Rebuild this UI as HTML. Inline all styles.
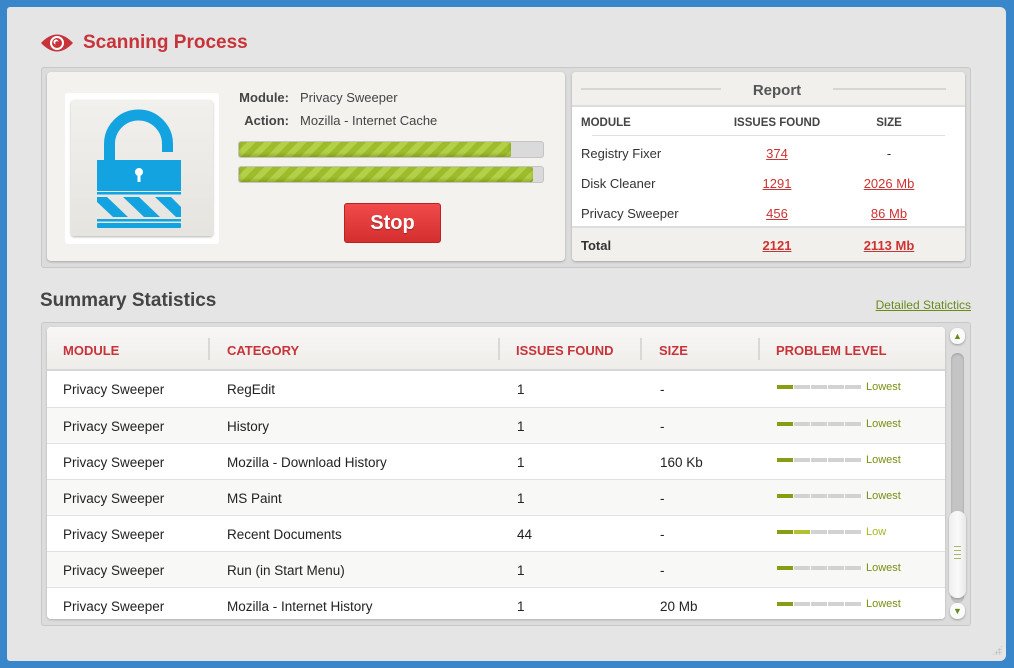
<!DOCTYPE html>
<html><head><meta charset="utf-8"><style>
*{margin:0;padding:0;box-sizing:border-box}
body{width:1014px;height:668px;background:#3a86ca;font-family:"Liberation Sans",sans-serif;position:relative;overflow:hidden;color:#333}
.abs{position:absolute}
#panel{left:7px;top:7px;width:999px;height:654px;background:#e5e5e5;border-radius:3px 6px 6px 3px}
.title{font-weight:bold;font-size:19px;color:#c8333a}
.box{background:#dcdcdc;border:1px solid #c8c8c8;border-radius:3px}
.card{background:#f3f2ef;border-radius:4px;box-shadow:0 1px 2px rgba(0,0,0,.25)}
.t13{font-size:13px}
.bar{height:17px;background:#dadada;border:1px solid #c4c4c4;border-radius:3px;overflow:hidden}
.fill{height:100%;background:repeating-linear-gradient(135deg,#9cbc2c 0 6px,#b4d048 6px 12px);border-radius:2px;box-shadow:inset 0 -2px 3px rgba(80,100,0,.35)}
.red{color:#c33;text-decoration:underline}
.th{font-weight:bold;font-size:13px;color:#c8333a}
.row{position:absolute;left:0;width:898px;height:36px;border-top:1px solid #e2e2e2;font-size:13.5px;color:#222}
.row span{position:absolute;top:11px}
.lvl{position:absolute;left:730px;top:14px;height:4px;width:84px;background:linear-gradient(90deg,#8a9c12 0 16px,transparent 16px 17px,#d2d2d2 17px 33px,transparent 33px 34px,#d2d2d2 34px 50px,transparent 50px 51px,#d2d2d2 51px 67px,transparent 67px 68px,#d2d2d2 68px 84px)}
.lvl.low{background:linear-gradient(90deg,#8a9c12 0 16px,transparent 16px 17px,#b4c030 17px 33px,transparent 33px 34px,#d2d2d2 34px 50px,transparent 50px 51px,#d2d2d2 51px 67px,transparent 67px 68px,#d2d2d2 68px 84px)}
.lt{position:absolute;left:819px;top:10px;font-size:11px;color:#7a8e12}
.sep{position:absolute;top:11px;width:2px;height:22px;background:#d8d8d8}
</style></head><body>
<div id="panel" class="abs"></div>
<svg class="abs" style="left:40px;top:32px" width="34" height="22" viewBox="0 0 34 22"><path d="M1 11 Q17 -6 33 11 Q17 28 1 11Z" fill="#c8333a"/><circle cx="17" cy="11" r="7" fill="#fff"/><circle cx="17" cy="11" r="5" fill="#c8333a"/><circle cx="16" cy="10" r="2.5" fill="#fff"/><circle cx="17" cy="11" r="1.8" fill="#c8333a"/></svg>
<div class="abs title" style="left:83px;top:32px">Scanning Process</div>

<div class="abs box" style="left:41px;top:67px;width:930px;height:201px"></div>
<div class="abs card" style="left:47px;top:72px;width:518px;height:189px"></div>
<div class="abs" style="left:65px;top:93px;width:154px;height:151px;background:#fff;border-radius:3px"></div>
<div class="abs" style="left:71px;top:100px;width:142px;height:136px;background:linear-gradient(#f1f0ed,#e6e4df);border-radius:3px;box-shadow:0 1px 2px rgba(0,0,0,.3)"></div>
<svg class="abs" style="left:97px;top:108px" width="90" height="122" viewBox="0 0 90 122"><path d="M12.5 54 V36 A29 29 0 0 1 70.5 36 V44" fill="none" stroke="#13a3e0" stroke-width="11"/><rect x="0" y="52" width="84" height="31" fill="#13a3e0"/><circle cx="42" cy="64" r="4" fill="#fff"/><rect x="40.5" y="65" width="3" height="9" fill="#fff"/><rect x="0" y="84" width="84" height="2.5" fill="#13a3e0"/><path d="M0 89 H10 L31 109 H16 L0 94Z M26 89 H42 L63 109 H47Z M58 89 H74 L84 99 V109 H79Z" fill="#13a3e0"/><rect x="0" y="111" width="84" height="2.5" fill="#13a3e0"/><rect x="0" y="115" width="84" height="5" rx="1" fill="#13a3e0"/></svg>
<div class="abs t13" style="left:200px;top:90px;width:89px;text-align:right;font-weight:bold;color:#444">Module:</div>
<div class="abs t13" style="left:300px;top:90px;color:#444">Privacy Sweeper</div>
<div class="abs t13" style="left:200px;top:113px;width:89px;text-align:right;font-weight:bold;color:#444">Action:</div>
<div class="abs t13" style="left:300px;top:113px;color:#444">Mozilla - Internet Cache</div>
<div class="abs bar" style="left:238px;top:141px;width:306px"><div class="fill" style="width:272px"></div></div>
<div class="abs bar" style="left:238px;top:166px;width:306px"><div class="fill" style="width:294px"></div></div>
<div class="abs" style="left:344px;top:203px;width:97px;height:40px;background:linear-gradient(#f04a4a,#d42e2e);border:1px solid #b82424;border-radius:3px;color:#fff;font-weight:bold;font-size:20px;text-align:center;line-height:38px;text-shadow:0 1px 1px rgba(0,0,0,.3)">Stop</div>

<div class="abs card" style="left:572px;top:72px;width:393px;height:189px;background:#fff;overflow:hidden">
 <div class="abs" style="left:0;top:0;width:393px;height:35px;background:#f1f0ed;border-bottom:2px solid #ddd"></div>
 <div class="abs" style="left:9px;top:16px;width:140px;height:2px;background:#d6d6d6"></div>
 <div class="abs" style="left:261px;top:16px;width:113px;height:2px;background:#d6d6d6"></div>
 <div class="abs" style="left:150px;top:10px;width:110px;text-align:center;font-weight:bold;font-size:15px;color:#555">Report</div>
 <div class="abs" style="left:9px;top:45px;font-weight:bold;font-size:11.5px;color:#444">MODULE</div>
 <div class="abs" style="left:145px;top:45px;width:120px;text-align:center;font-weight:bold;font-size:11.5px;color:#444">ISSUES FOUND</div>
 <div class="abs" style="left:277px;top:45px;width:80px;text-align:center;font-weight:bold;font-size:11.5px;color:#444">SIZE</div>
 <div class="abs" style="left:20px;top:63px;width:353px;height:1px;background:#e0e0e0"></div>
 <div class="abs t13" style="left:9px;top:74px">Registry Fixer</div>
 <div class="abs t13 red" style="left:145px;top:74px;width:120px;text-align:center">374</div>
 <div class="abs t13" style="left:277px;top:74px;width:80px;text-align:center">-</div>
 <div class="abs t13" style="left:9px;top:104px">Disk Cleaner</div>
 <div class="abs t13 red" style="left:145px;top:104px;width:120px;text-align:center">1291</div>
 <div class="abs t13 red" style="left:277px;top:104px;width:80px;text-align:center">2026 Mb</div>
 <div class="abs t13" style="left:9px;top:134px">Privacy Sweeper</div>
 <div class="abs t13 red" style="left:145px;top:134px;width:120px;text-align:center">456</div>
 <div class="abs t13 red" style="left:277px;top:134px;width:80px;text-align:center">86 Mb</div>
 <div class="abs" style="left:0;top:154px;width:393px;height:35px;background:#f1f0ed;border-top:2px solid #ddd"></div>
 <div class="abs t13" style="left:9px;top:166px;font-weight:bold;color:#333">Total</div>
 <div class="abs t13 red" style="left:145px;top:166px;width:120px;text-align:center;font-weight:bold">2121</div>
 <div class="abs t13 red" style="left:277px;top:166px;width:80px;text-align:center;font-weight:bold">2113 Mb</div>
</div>

<div class="abs" style="left:40px;top:290px;font-weight:bold;font-size:19px;color:#444">Summary Statistics</div>
<div class="abs" style="left:840px;top:298px;width:131px;text-align:right;font-size:12px;color:#6a8a1a;text-decoration:underline">Detailed Statictics</div>

<div class="abs box" style="left:41px;top:322px;width:930px;height:304px"></div>
<div class="abs" style="left:47px;top:327px;width:898px;height:292px;background:#fff;border-radius:4px;overflow:hidden;box-shadow:0 1px 2px rgba(0,0,0,.2)">
 <div class="abs" style="left:0;top:0;width:898px;height:44px;background:linear-gradient(#f8f7f5,#eeedea);border-bottom:2px solid #d6d6d6"></div>
 <div class="abs th" style="left:16px;top:16px">MODULE</div>
 <div class="sep" style="left:161px"></div>
 <div class="abs th" style="left:180px;top:16px">CATEGORY</div>
 <div class="sep" style="left:451px"></div>
 <div class="abs th" style="left:469px;top:16px">ISSUES FOUND</div>
 <div class="sep" style="left:593px"></div>
 <div class="abs th" style="left:612px;top:16px">SIZE</div>
 <div class="sep" style="left:711px"></div>
 <div class="abs th" style="left:729px;top:16px">PROBLEM LEVEL</div>

 <div class="row" style="top:44px;background:#fff;border-top:none"><span style="left:16px">Privacy Sweeper</span><span style="left:180px">RegEdit</span><span style="left:470px">1</span><span style="left:613px">-</span><div class="lvl"></div><div class="lt">Lowest</div></div>
 <div class="row" style="top:80px;background:#f8f8f6"><span style="left:16px">Privacy Sweeper</span><span style="left:180px">History</span><span style="left:470px">1</span><span style="left:613px">-</span><div class="lvl"></div><div class="lt">Lowest</div></div>
 <div class="row" style="top:116px;background:#fff"><span style="left:16px">Privacy Sweeper</span><span style="left:180px">Mozilla - Download History</span><span style="left:470px">1</span><span style="left:613px">160 Kb</span><div class="lvl"></div><div class="lt">Lowest</div></div>
 <div class="row" style="top:152px;background:#f8f8f6"><span style="left:16px">Privacy Sweeper</span><span style="left:180px">MS Paint</span><span style="left:470px">1</span><span style="left:613px">-</span><div class="lvl"></div><div class="lt">Lowest</div></div>
 <div class="row" style="top:188px;background:#fff"><span style="left:16px">Privacy Sweeper</span><span style="left:180px">Recent Documents</span><span style="left:470px">44</span><span style="left:613px">-</span><div class="lvl low"></div><div class="lt" style="color:#a8b822">Low</div></div>
 <div class="row" style="top:224px;background:#f8f8f6"><span style="left:16px">Privacy Sweeper</span><span style="left:180px">Run (in Start Menu)</span><span style="left:470px">1</span><span style="left:613px">-</span><div class="lvl"></div><div class="lt">Lowest</div></div>
 <div class="row" style="top:260px;background:#fff"><span style="left:16px">Privacy Sweeper</span><span style="left:180px">Mozilla - Internet History</span><span style="left:470px">1</span><span style="left:613px">20 Mb</span><div class="lvl"></div><div class="lt">Lowest</div></div>
</div>

<div class="abs" style="left:950px;top:328px;width:15px;height:16px;border-radius:7px;background:#fafafa;box-shadow:0 1px 2px rgba(0,0,0,.3);color:#6a8a1a;font-size:9px;text-align:center;line-height:16px">&#9650;</div>
<div class="abs" style="left:951px;top:353px;width:13px;height:250px;border-radius:7px;background:#c4c4c4;box-shadow:inset 0 1px 2px rgba(0,0,0,.2)"></div>
<div class="abs" style="left:949px;top:511px;width:17px;height:87px;border-radius:8px;background:linear-gradient(90deg,#eee,#fafafa,#e8e8e8);box-shadow:0 1px 2px rgba(0,0,0,.25)"></div>
<div class="abs" style="left:954px;top:546px;width:7px;height:14px;background:repeating-linear-gradient(#a8b86a 0 1px,transparent 1px 4px)"></div>
<div class="abs" style="left:950px;top:603px;width:15px;height:16px;border-radius:7px;background:#fafafa;box-shadow:0 1px 2px rgba(0,0,0,.3);color:#6a8a1a;font-size:9px;text-align:center;line-height:16px">&#9660;</div>
<div class="abs" style="left:992px;top:645px;width:10px;height:10px;background:radial-gradient(circle,#bbb 0.8px,transparent 1.2px) 0 0/3px 3px;clip-path:polygon(100% 0,100% 100%,0 100%)"></div>
</body></html>
